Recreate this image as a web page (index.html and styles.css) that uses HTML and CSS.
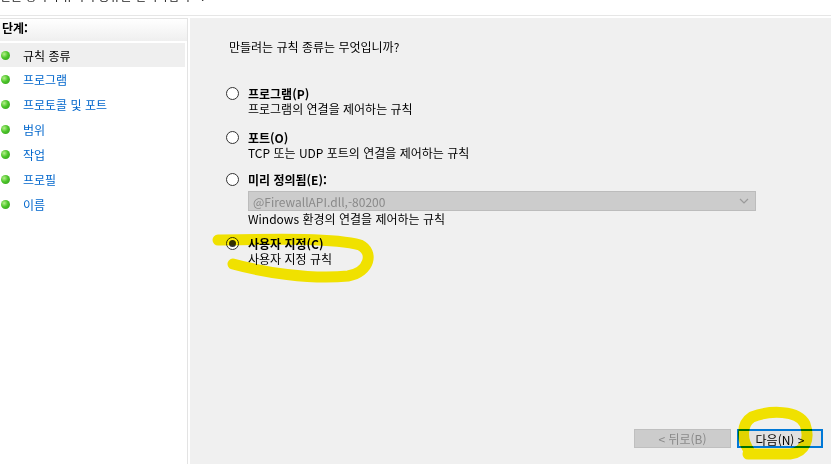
FILE: index.html
```html
<!DOCTYPE html>
<html lang="ko">
<head>
<meta charset="utf-8">
<link rel="stylesheet" href="styles.css">
</head>
<body>
<div class="top"><p class="top-text">만들 방화벽 규칙의 종류를 선택하십시오.</p></div>
<div class="main">
  <aside class="steps">
    <div class="steps-head">단계:</div>
    <ul class="step-list">
      <li class="step current"><span class="dot"></span>규칙 종류</li>
      <li class="step"><span class="dot"></span>프로그램</li>
      <li class="step"><span class="dot"></span>프로토콜 및 포트</li>
      <li class="step"><span class="dot"></span>범위</li>
      <li class="step"><span class="dot"></span>작업</li>
      <li class="step"><span class="dot"></span>프로필</li>
      <li class="step"><span class="dot"></span>이름</li>
    </ul>
  </aside>
  <section class="content">
    <p class="question">만들려는 규칙 종류는 무엇입니까?</p>
    <div class="options">
      <div class="option opt1">
        <div class="opt-label"><span class="radio"></span><b>프로그램(P)</b></div>
        <div class="opt-desc">프로그램의 연결을 제어하는 규칙</div>
      </div>
      <div class="option opt2">
        <div class="opt-label"><span class="radio"></span><b>포트(O)</b></div>
        <div class="opt-desc">TCP 또는 UDP 포트의 연결을 제어하는 규칙</div>
      </div>
      <div class="option opt3">
        <div class="opt-label"><span class="radio"></span><b>미리 정의됨(E):</b></div>
        <div class="select"><span>@FirewallAPI.dll,-80200</span>
          <svg class="chev" width="10" height="6" viewBox="0 0 10 6"><path d="M1 1 L5 5 L9 1" fill="none" stroke="#9a9a9a" stroke-width="1.2"/></svg>
        </div>
        <div class="opt-desc">Windows 환경의 연결을 제어하는 규칙</div>
      </div>
      <div class="option opt4">
        <div class="opt-label"><span class="radio checked"></span><b>사용자 지정(C)</b></div>
        <div class="opt-desc">사용자 지정 규칙</div>
      </div>
    </div>
    <div class="buttons">
      <button class="btn back" disabled>&lt; 뒤로(B)</button>
      <button class="btn next">다음(N) &gt;</button>
    </div>
  </section>
</div>
<svg class="marks" width="831" height="464" viewBox="0 0 831 464">
  <path d="M218 240 C 280 239, 335 238, 360 245 C 374 252, 370 272, 348 276 C 310 280, 262 272, 233 264" fill="none" stroke="#fff000" stroke-width="11" stroke-linecap="round" stroke-linejoin="round"/>
  <path d="M750 452 C 741 440, 741 424, 752 417 C 770 410, 798 410, 805 424 C 810 438, 806 452, 790 454 L 748 454" fill="none" stroke="#fff000" stroke-width="11" stroke-linecap="round" stroke-linejoin="round"/>
</svg>
</body>
</html>
```
FILE: styles.css
```css
* { box-sizing: border-box; }
html, body { margin: 0; padding: 0; }
body {
  width: 831px;
  height: 464px;
  overflow: hidden;
  background: #ffffff;
  font-family: "Noto Sans CJK KR", "Noto Sans", sans-serif;
  font-size: 12px;
  color: #000;
  position: relative;
}
.top {
  height: 16px;
  overflow: hidden;
  border-bottom: 1px solid #e6e6e6;
}
.top-text {
  margin: -12px 0 0 0;
  line-height: 16px;
  font-size: 12px;
  color: #222;
}
.main {
  display: flex;
  height: 448px;
  padding-top: 2px;
}
.steps {
  width: 188px;
  border-top: 1px solid #e3e3e3;
  border-right: 1px solid #e3e3e3;
  background: #fff;
}
.steps-head {
  height: 22px;
  line-height: 18px;
  padding-left: 2px;
  font-weight: bold;
  background: linear-gradient(#ffffff, #efefef);
}
.step-list {
  list-style: none;
  margin: 2px 0 0 0;
  padding: 0 2px 0 0;
}
.step {
  display: flex;
  align-items: center;
  height: 25px;
  color: #0066cc;
}
.step.current {
  color: #000;
  background: #efefef;
  height: 24px;
}
.dot {
  width: 9px;
  height: 9px;
  border-radius: 50%;
  margin: 0 13px 0 1px;
  background: radial-gradient(circle at 35% 35%, #b6f08a 0%, #4cc52a 45%, #2f9a17 100%);
}
.content {
  flex: 1;
  margin-left: 2px;
  background: #f0f0f0;
  display: flex;
  flex-direction: column;
  padding: 21px 0 0 0;
}
.question {
  margin: 0 0 0 39px;
  line-height: 16px;
}
.options {
  margin: 30px 0 0 36px;
  display: flex;
  flex-direction: column;
}
.opt2 { margin-top: 12px; }
.opt3 { margin-top: 10px; }
.opt4 { margin-top: 8px; }
.opt-label {
  display: flex;
  align-items: center;
  height: 16px;
}
.opt-label b { font-weight: bold; }
.radio {
  width: 13px;
  height: 13px;
  border: 1px solid #333;
  border-radius: 50%;
  background: #fff;
  margin-right: 9px;
  position: relative;
}
.radio.checked::after {
  content: "";
  position: absolute;
  left: 2px;
  top: 2px;
  width: 7px;
  height: 7px;
  border-radius: 50%;
  background: #333;
}
.opt-desc {
  margin-left: 22px;
  line-height: 16px;
}
.select {
  margin: 4px 0 0 22px;
  width: 508px;
  height: 20px;
  border: 1px solid #bcbcbc;
  background: #cccccc;
  color: #8a8a8a;
  display: flex;
  align-items: center;
  justify-content: space-between;
  padding: 0 6px 0 4px;
}
.buttons {
  margin-top: auto;
  margin-bottom: 16px;
  display: flex;
  gap: 6px;
  padding-left: 444px;
}
.btn {
  font-family: inherit;
  font-size: 12px;
  height: 19px;
  padding: 0;
  margin: 0;
}
.back {
  width: 97px;
  background: #cccccc;
  border: 1px solid #bfbfbf;
  color: #8a8a8a;
}
.next {
  width: 86px;
  background: #e1e1e1;
  border: 2px solid #0078d7;
  color: #000;
}
.marks {
  position: absolute;
  left: 0;
  top: 0;
  mix-blend-mode: multiply;
  pointer-events: none;
}
```
